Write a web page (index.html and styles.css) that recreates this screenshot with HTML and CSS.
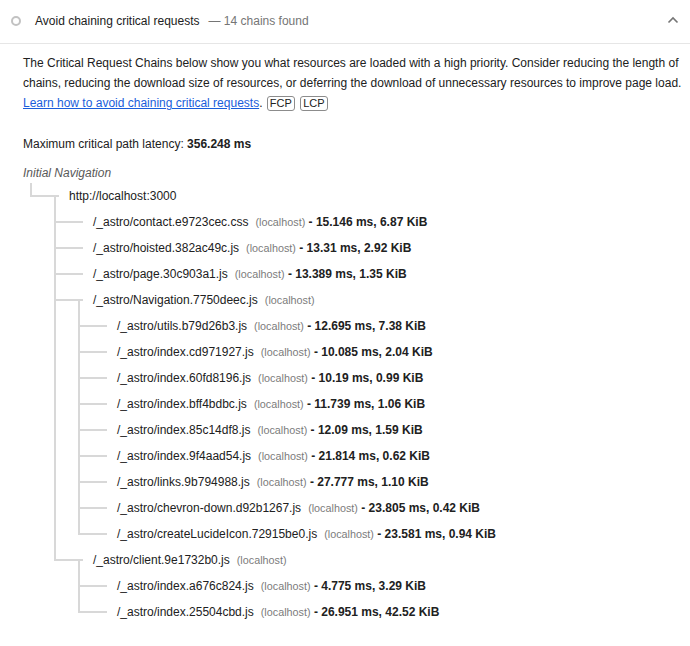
FILE: index.html
```
<!DOCTYPE html>
<html>
<head>
<meta charset="utf-8">
<link rel="stylesheet" href="styles.css">
</head>
<body>
<div class="audit">
  <div class="audit-header">
    <span class="score-icon"></span>
    <span class="title">Avoid chaining critical requests</span>
    <span class="display-value">— 14 chains found</span>
    <span class="spacer"></span>
    <svg class="chevron" width="12" height="8" viewBox="0 0 12 8"><path d="M1.5 6.5 L6 2 L10.5 6.5" fill="none" stroke="#757575" stroke-width="1.6"/></svg>
  </div>
  <div class="audit-body">
    <p class="desc">The Critical Request Chains below show you what resources are loaded with a high priority. Consider reducing the length of chains, reducing the download size of resources, or deferring the download of unnecessary resources to improve page load. <a href="#">Learn how to avoid chaining critical requests</a>. <span class="adorn">FCP</span> <span class="adorn">LCP</span></p>
    <div class="summary">Maximum critical path latency: <b>356.248 ms</b></div>
    <div class="crc">
      <div class="initial-nav">Initial Navigation</div>

      <div class="node"><span class="m up-right"></span><span class="m right"></span><span class="m horiz-down"></span><span class="val">http://localhost:3000</span></div>

      <div class="node"><span class="m"></span><span class="m"></span><span class="m vert-right"></span><span class="m right"></span><span class="m right"></span><span class="val">/_astro/contact.e9723cec.css<span class="host">(localhost)</span><b> - 15.146 ms, 6.87 KiB</b></span></div>

      <div class="node"><span class="m"></span><span class="m"></span><span class="m vert-right"></span><span class="m right"></span><span class="m right"></span><span class="val">/_astro/hoisted.382ac49c.js<span class="host">(localhost)</span><b> - 13.31 ms, 2.92 KiB</b></span></div>

      <div class="node"><span class="m"></span><span class="m"></span><span class="m vert-right"></span><span class="m right"></span><span class="m right"></span><span class="val">/_astro/page.30c903a1.js<span class="host">(localhost)</span><b> - 13.389 ms, 1.35 KiB</b></span></div>

      <div class="node"><span class="m"></span><span class="m"></span><span class="m vert-right"></span><span class="m right"></span><span class="m horiz-down"></span><span class="val">/_astro/Navigation.7750deec.js<span class="host">(localhost)</span></span></div>

      <div class="node"><span class="m"></span><span class="m"></span><span class="m vert"></span><span class="m"></span><span class="m vert-right"></span><span class="m right"></span><span class="m right"></span><span class="val">/_astro/utils.b79d26b3.js<span class="host">(localhost)</span><b> - 12.695 ms, 7.38 KiB</b></span></div>

      <div class="node"><span class="m"></span><span class="m"></span><span class="m vert"></span><span class="m"></span><span class="m vert-right"></span><span class="m right"></span><span class="m right"></span><span class="val">/_astro/index.cd971927.js<span class="host">(localhost)</span><b> - 10.085 ms, 2.04 KiB</b></span></div>

      <div class="node"><span class="m"></span><span class="m"></span><span class="m vert"></span><span class="m"></span><span class="m vert-right"></span><span class="m right"></span><span class="m right"></span><span class="val">/_astro/index.60fd8196.js<span class="host">(localhost)</span><b> - 10.19 ms, 0.99 KiB</b></span></div>

      <div class="node"><span class="m"></span><span class="m"></span><span class="m vert"></span><span class="m"></span><span class="m vert-right"></span><span class="m right"></span><span class="m right"></span><span class="val">/_astro/index.bff4bdbc.js<span class="host">(localhost)</span><b> - 11.739 ms, 1.06 KiB</b></span></div>

      <div class="node"><span class="m"></span><span class="m"></span><span class="m vert"></span><span class="m"></span><span class="m vert-right"></span><span class="m right"></span><span class="m right"></span><span class="val">/_astro/index.85c14df8.js<span class="host">(localhost)</span><b> - 12.09 ms, 1.59 KiB</b></span></div>

      <div class="node"><span class="m"></span><span class="m"></span><span class="m vert"></span><span class="m"></span><span class="m vert-right"></span><span class="m right"></span><span class="m right"></span><span class="val">/_astro/index.9f4aad54.js<span class="host">(localhost)</span><b> - 21.814 ms, 0.62 KiB</b></span></div>

      <div class="node"><span class="m"></span><span class="m"></span><span class="m vert"></span><span class="m"></span><span class="m vert-right"></span><span class="m right"></span><span class="m right"></span><span class="val">/_astro/links.9b794988.js<span class="host">(localhost)</span><b> - 27.777 ms, 1.10 KiB</b></span></div>

      <div class="node"><span class="m"></span><span class="m"></span><span class="m vert"></span><span class="m"></span><span class="m vert-right"></span><span class="m right"></span><span class="m right"></span><span class="val">/_astro/chevron-down.d92b1267.js<span class="host">(localhost)</span><b> - 23.805 ms, 0.42 KiB</b></span></div>

      <div class="node"><span class="m"></span><span class="m"></span><span class="m vert"></span><span class="m"></span><span class="m up-right"></span><span class="m right"></span><span class="m right"></span><span class="val">/_astro/createLucideIcon.72915be0.js<span class="host">(localhost)</span><b> - 23.581 ms, 0.94 KiB</b></span></div>

      <div class="node"><span class="m"></span><span class="m"></span><span class="m up-right"></span><span class="m right"></span><span class="m horiz-down"></span><span class="val">/_astro/client.9e1732b0.js<span class="host">(localhost)</span></span></div>

      <div class="node"><span class="m"></span><span class="m"></span><span class="m"></span><span class="m"></span><span class="m vert-right"></span><span class="m right"></span><span class="m right"></span><span class="val">/_astro/index.a676c824.js<span class="host">(localhost)</span><b> - 4.775 ms, 3.29 KiB</b></span></div>

      <div class="node"><span class="m"></span><span class="m"></span><span class="m"></span><span class="m"></span><span class="m up-right"></span><span class="m right"></span><span class="m right"></span><span class="val">/_astro/index.25504cbd.js<span class="host">(localhost)</span><b> - 26.951 ms, 42.52 KiB</b></span></div>
    </div>
  </div>
</div>
</body>
</html>
```

FILE: styles.css
```
* { box-sizing: border-box; }
html, body { margin: 0; padding: 0; background: #fff; }
body {
  font-family: "Liberation Sans", Arial, sans-serif;
  color: #212121;
}
.audit-header {
  display: flex;
  align-items: center;
  height: 44px;
  padding: 0 11px 1px 11px;
  border-bottom: 1px solid #e6e6e6;
  font-size: 12px;
}
.score-icon {
  width: 10px;
  height: 10px;
  border: 2px solid #c2c2c2;
  border-radius: 50%;
  flex: none;
}
.title {
  margin-left: 14px;
  color: #212121;
}
.display-value {
  margin-left: 9px;
  color: #757575;
}
.spacer { flex: 1; }
.chevron {
  margin-right: 0;
  margin-top: -2px;
}
.audit-body {
  padding: 9px 8px 0 23px;
}
.desc {
  margin: 0;
  font-size: 12px;
  line-height: 20px;
  color: #212121;
}
.desc a {
  color: #1a5ddb;
  text-decoration: underline;
}
.adorn {
  display: inline-block;
  border: 1px solid #8c8c8c;
  border-radius: 3px;
  padding: 0 2px;
  margin: 0 1px;
  font-size: 11px;
  line-height: 1.15;
  color: #212121;
}
.summary {
  margin-top: 21px;
  font-size: 12px;
  line-height: 20px;
  margin-bottom: 9px;
}
.summary b { font-weight: 700; }
.crc { font-size: 12px; }
.initial-nav {
  color: #595959;
  font-style: italic;
  line-height: 20px;
}
.node {
  display: flex;
  height: 26px;
  line-height: 26px;
  white-space: nowrap;
}
.m {
  flex: none;
  width: 12px;
  height: 26px;
  background-repeat: no-repeat;
}
.right {
  background-image: linear-gradient(#d8d8d8, #d8d8d8);
  background-position: 0 12px;
  background-size: 12px 2px;
}
.vert {
  background-image: linear-gradient(#d8d8d8, #d8d8d8);
  background-position: 7px 0;
  background-size: 2px 26px;
}
.vert-right {
  background-image: linear-gradient(#d8d8d8, #d8d8d8), linear-gradient(#d8d8d8, #d8d8d8);
  background-position: 7px 0, 9px 12px;
  background-size: 2px 26px, 3px 2px;
}
.up-right {
  background-image: linear-gradient(#d8d8d8, #d8d8d8), linear-gradient(#d8d8d8, #d8d8d8);
  background-position: 7px 0, 9px 12px;
  background-size: 2px 14px, 3px 2px;
}
.horiz-down {
  background-image: linear-gradient(#d8d8d8, #d8d8d8), linear-gradient(#d8d8d8, #d8d8d8);
  background-position: 0 12px, 7px 12px;
  background-size: 12px 2px, 2px 14px;
}
.val {
  margin-left: 10px;
}
.host {
  margin-left: 7px;
  font-size: 90%;
  opacity: 0.6;
}
.val b { font-weight: 700; }
```
